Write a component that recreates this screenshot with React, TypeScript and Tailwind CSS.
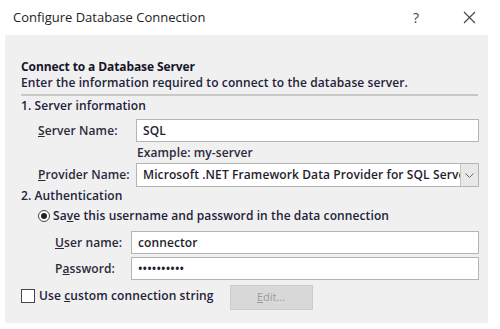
import React from 'react';

const FONT = { fontFamily: '"Open Sans", "Noto Sans", sans-serif' };

function Field({ accel, rest, value, pre = '', width = 'w-[98px]', className = '' }: { accel: string; rest: string; value: string; pre?: string; width?: string; className?: string }) {
  return (
    <div className={`flex items-center ${className}`}>
      <span className={`${width} shrink-0 text-[12px] font-semibold text-[#2a2a3a] tracking-[0.1px]`}>
        {pre}<span className="underline">{accel}</span>{rest}
      </span>
      <div className="flex-1 h-[23px] bg-white border border-[#b4b4b4] flex items-center px-[6px] text-[12px] font-semibold text-[#1e1e2e] tracking-[0.1px]">
        {value}
      </div>
    </div>
  );
}

export default function App() {
  return (
    <div className="w-[500px] h-[329px] bg-white overflow-hidden" style={FONT}>
      {/* TITLE BAR */}
      <div className="h-[35px] flex items-center pl-[13px] pr-[24px]">
        <span className="text-[13px] text-[#222]">Configure Database Connection</span>
        <span className="ml-auto text-[14px] text-[#444] mr-[44px]">?</span>
        <svg width="13" height="13" viewBox="0 0 13 13" className="stroke-[#444]">
          <path d="M1 1 L12 12 M12 1 L1 12" strokeWidth="1.1" />
        </svg>
      </div>

      {/* PANEL */}
      <div className="ml-[5px] w-[483px] h-[288px] bg-[#f0f0f0] pl-[16px] pr-[9px] pt-[24px]">
        <div className="text-[12px] font-bold text-[#15152a] leading-[16px] tracking-[-0.1px]">Connect to a Database Server</div>
        <div className="text-[12px] font-semibold text-[#22223a] leading-[16px] tracking-[0.1px]">
          Enter the information required to connect to the database server.
        </div>
        <div className="h-[2px] bg-[#c8c8c8] mt-[3px] mr-[1px]" />

        <div className="text-[12px] font-semibold text-[#22223a] leading-[16px] mt-[2px] tracking-[0.1px]">1. Server information</div>
        <Field accel="S" rest="erver Name:" value="SQL" className="pl-[17px] mt-[5px]" />
        <div className="pl-[116px] text-[12px] font-semibold text-[#2a2a3a] leading-[16px] mt-[3px] tracking-[0.1px]">Example: my-server</div>
        <div className="flex items-center pl-[17px] mt-[2px]">
          <span className="w-[98px] shrink-0 text-[12px] font-semibold text-[#2a2a3a] tracking-[0.1px]">
            <span className="underline">P</span>rovider Name:
          </span>
          <div className="flex-1 h-[24px] bg-white border border-[#b4b4b4] flex items-center overflow-hidden">
            <span className="flex-1 px-[6px] text-[12px] font-semibold text-[#1e1e2e] whitespace-nowrap overflow-hidden tracking-[0.1px]">
              Microsoft .NET Framework Data Provider for SQL Server
            </span>
            <div className="w-[18px] h-full border-l border-[#c4c4c4] bg-[#e8e8e8] flex items-center justify-center">
              <svg width="9" height="5" viewBox="0 0 9 5" fill="none" stroke="#666">
                <path d="M0.5 0.5 L4.5 4.5 L8.5 0.5" />
              </svg>
            </div>
          </div>
        </div>

        <div className="text-[12px] font-semibold text-[#22223a] leading-[16px] mt-[1px] tracking-[0.1px]">2. Authentication</div>
        <div className="flex items-center pl-[17px] mt-[4px]">
          <div className="w-[12px] h-[12px] rounded-full border border-[#444] bg-white flex items-center justify-center">
            <div className="w-[6px] h-[6px] rounded-full bg-[#222]" />
          </div>
          <span className="ml-[3px] text-[12px] font-semibold text-[#22223a] leading-[16px] tracking-[0.1px]">
            Sa<span className="underline">v</span>e this username and password in the data connection
          </span>
        </div>
        <Field accel="U" rest="ser name:" value="connector" width="w-[76px]" className="pl-[34px] mt-[7px]" />
        <Field pre="P" accel="a" rest="ssword:" value="••••••••••" width="w-[76px]" className="pl-[34px] mt-[3px]" />

        <div className="flex items-center mt-[5px]">
          <div className="w-[14px] h-[14px] border border-[#444] bg-white mb-[3px]" />
          <span className="ml-[4px] text-[12px] font-semibold text-[#22223a] leading-[16px] tracking-[0.1px] mb-[3px]">
            Use <span className="underline">c</span>ustom connection string
          </span>
          <div className="ml-[16px] w-[83px] h-[25px] bg-[#d8d8d8] border border-[#cccccc] flex items-center justify-center text-[11px] text-[#9a9a9a]">
            <span className="underline">E</span>dit...
          </div>
        </div>
      </div>
    </div>
  );
}
